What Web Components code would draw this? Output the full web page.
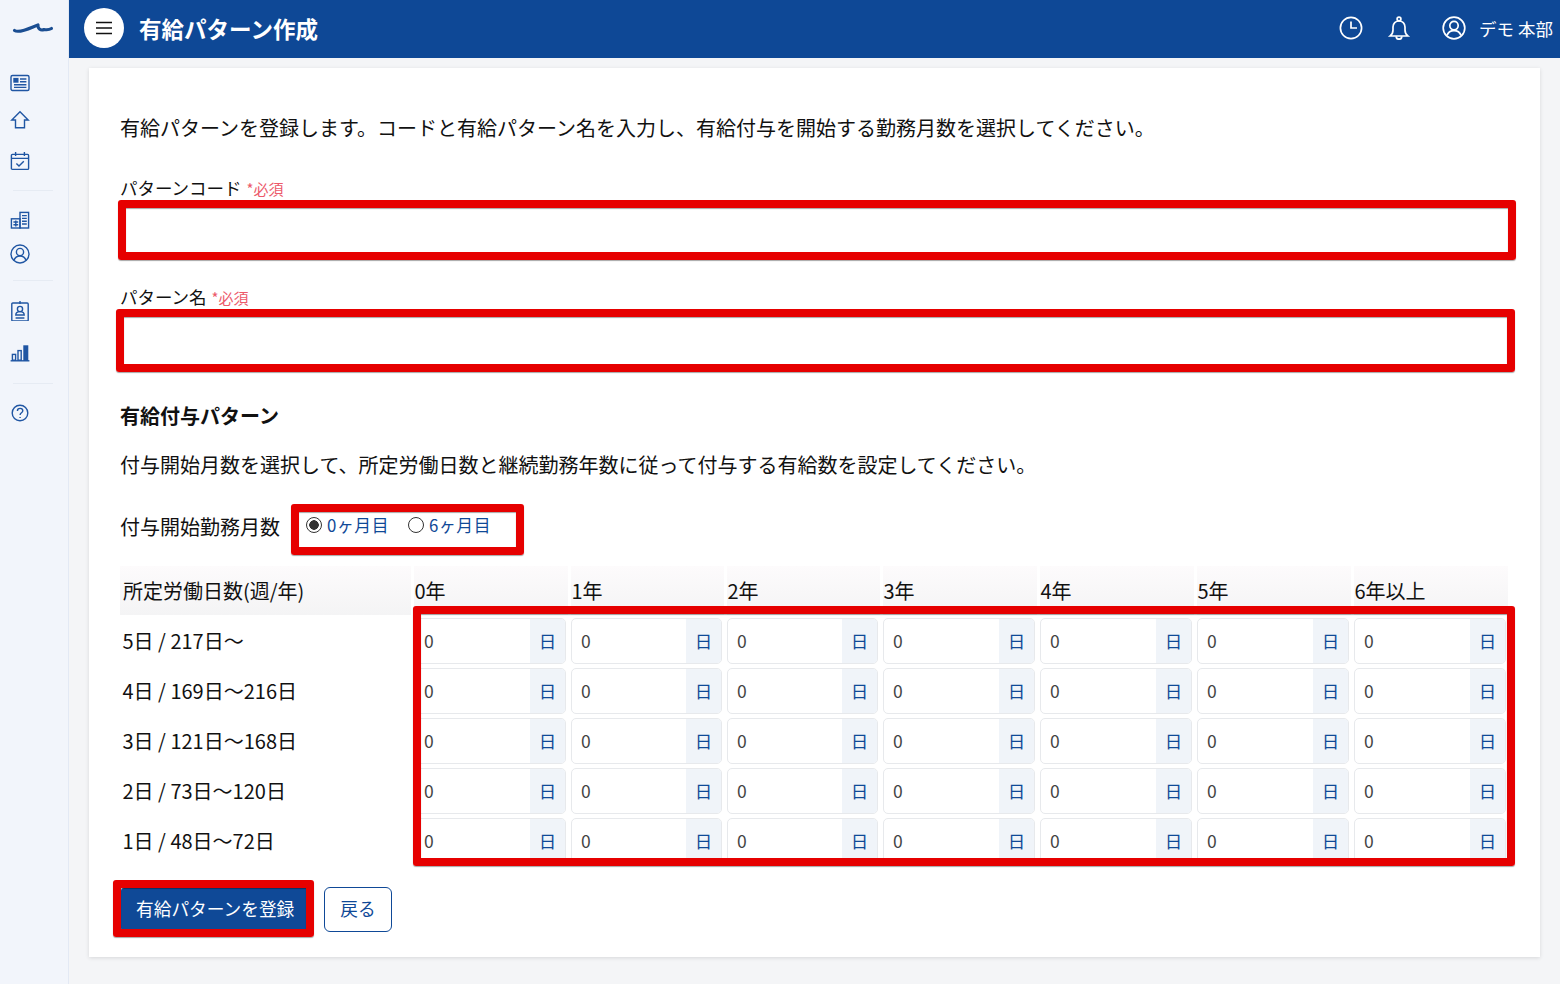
<!doctype html>
<html lang="ja">
<head>
<meta charset="utf-8">
<title>有給パターン作成</title>
<style>
  html, body { margin: 0; height: 100%; }
  body {
    font-family: "Noto Sans CJK JP", "Noto Sans", sans-serif;
    color: #111;
    background: #f4f5f7;
    overflow: hidden;
  }
</style>
</head>
<body>
<app-shell>
  <side-nav slot="side"></side-nav>
  <top-bar slot="top" heading="有給パターン作成" user="デモ 本部"></top-bar>
  <form-card>
    <note-text style="margin-bottom:32px">有給パターンを登録します。コードと有給パターン名を入力し、有給付与を開始する勤務月数を選択してください。</note-text>
    <text-field label="パターンコード"></text-field>
    <text-field label="パターン名" style="margin-top:30px"></text-field>
    <note-text bold style="margin-top:38px">有給付与パターン</note-text>
    <note-text style="margin-top:19px">付与開始月数を選択して、所定労働日数と継続勤務年数に従って付与する有給数を設定してください。</note-text>
    <radio-row label="付与開始勤務月数" style="margin-top:32px">
      <radio-item checked>0ヶ月目</radio-item>
      <radio-item>6ヶ月目</radio-item>
    </radio-row>
    <grant-table></grant-table>
    <action-row>
      <app-button primary>有給パターンを登録</app-button>
      <app-button>戻る</app-button>
    </action-row>
  </form-card>
  <mark-box slot="marks" style="left:118px;top:200px;width:1398px;height:60px"></mark-box>
  <mark-box slot="marks" style="left:116px;top:309px;width:1399px;height:63px"></mark-box>
  <mark-box slot="marks" style="left:291px;top:504px;width:233px;height:51px"></mark-box>
  <mark-box slot="marks" style="left:413px;top:606px;width:1102px;height:260px"></mark-box>
  <mark-box slot="marks" style="left:113px;top:880px;width:201px;height:57px"></mark-box>
</app-shell>

<script>
const ICONS = {
  card: '<rect x="1" y="2.500" width="18" height="15" rx="1.500"/><rect x="4" y="5.600" width="3.800" height="3.400" fill="currentColor"/><path d="M10 6h6.400M10 8.800h6.400M4 11.800h12.400M4 14.400h12.400"/>',
  home: '<path d="M10 1.800 1.800 10h3.700v7.800h9V10h3.700z"/>',
  calendar: '<rect x="1.400" y="3.400" width="17.200" height="15" rx="1"/><path d="M1.400 7.400h17.200M5.600 1v4M14.400 1v4M6.400 12.400l2.600 2.600 4.800-4.800"/>',
  office: '<rect x="1.400" y="8.800" width="8.600" height="9.200"/><rect x="10" y="2.400" width="8.600" height="15.600"/><path d="M12 5.600h4.800M12 8.400h4.800M12 11.200h4.800M12 14h4.800M3.400 12h4.800M3.400 14.800h4.800M5.800 10.500v6"/>',
  person: '<circle cx="10" cy="10" r="9"/><circle cx="10" cy="8" r="3.600"/><path d="M4 16.400c1-3.200 3.200-4.400 6-4.400s5 1.200 6 4.400"/>',
  badge: '<rect x="1.800" y="2" width="16.400" height="18" rx="1"/><path d="M10 0v3"/><circle cx="10" cy="8" r="2.600"/><path d="M5.800 14c0-2.200 1.800-3.400 4.200-3.400s4.200 1.200 4.200 3.400zM5.600 17h8.800"/>',
  chart: '<path d="M.6 17.800h18.800"/><rect x="2.400" y="11.400" width="3.200" height="5.800"/><rect x="8" y="7.600" width="3.200" height="9.600"/><rect x="14" y="3" width="3.600" height="14.200" fill="currentColor"/>',
  help: '<circle cx="10" cy="10" r="7.800"/><path d="M7.400 8c0-1.600 1-2.600 2.700-2.600s2.700 1 2.700 2.400c0 2-2.700 2-2.700 4.200"/><path d="M10.100 14v1.100"/>',
  clock: '<circle cx="12" cy="12" r="10.600"/><path d="M12 5.600V12h6"/>',
  bell: '<path d="M3.200 20c1.800-1.500 2.800-3.200 2.800-6v-3c0-3.400 2.600-6 6-6s6 2.600 6 6v3c0 2.800 1 4.500 2.800 6z"/><circle cx="12" cy="3" r="1.900"/><path d="M9.200 20.200c0 2 1.300 3 2.800 3s2.800-1 2.800-3"/>',
  user: '<circle cx="12" cy="12" r="10.800"/><circle cx="12" cy="9.600" r="4.200"/><path d="M5 19.400c1.200-3.400 3.800-4.800 7-4.800s5.800 1.400 7 4.800"/>'
};

class AppShell extends HTMLElement {
  connectedCallback() {
    this.attachShadow({ mode: "open" }).innerHTML = `
      <style>
        :host { display: grid; grid-template-columns: 69px 1fr; grid-template-rows: 58px 1fr; width: 1560px; height: 984px; position: relative; overflow: hidden; }
        #side { grid-row: 1 / 3; }
        #main { padding: 10px 20px 0; }
      </style>
      <div id="side"><slot name="side"></slot></div>
      <div id="top"><slot name="top"></slot></div>
      <div id="main"><slot></slot></div>
      <slot name="marks"></slot>
    `;
  }
}

class SideNav extends HTMLElement {
  connectedCallback() {
    const item = (name, top, size = 20) => `<svg class="icon" style="margin-top:${top}px" width="${size}" height="${size}" viewBox="0 0 20 20"><g>${ICONS[name]}</g></svg>`;
    this.attachShadow({ mode: "open" }).innerHTML = `
      <style>
        :host { display: flex; flex-direction: column; align-items: flex-start; box-sizing: border-box; height: 984px; background: #f2f5fb; border-right: 1px solid #e3e9f4; color: #2056a3; }
        #logo { width: 68px; height: 58px; flex: none; display: block; margin-bottom: 15px; }
        svg g { fill: none; stroke: currentColor; stroke-width: 1.400; }
        svg { flex: none; display: block; }
        .icon { margin-left: 10px; }
        hr { width: 40px; border: 0; border-top: 1px solid #e6ebf3; margin: 0 0 0 13px; flex: none; }
      </style>
      <svg id="logo" viewBox="0 0 68 58"><path d="M14.500 30.500C18 33 26 30 33 27l5-2.200c-.5 4.200 3 6.200 6 4.700 3 .5 5 .5 7.500-1" fill="none" stroke="#1b4e92" stroke-width="3.100" stroke-linecap="round" stroke-linejoin="round"/></svg>
      ${item("card", 0)}${item("home", 17)}${item("calendar", 21)}
      <hr style="margin-top:19px">
      ${item("office", 19)}${item("person", 14)}
      <hr style="margin-top:16px">
      ${item("badge", 20)}${item("chart", 22)}
      <hr style="margin-top:20px">
      ${item("help", 19)}
    `;
  }
}

class TopBar extends HTMLElement {
  connectedCallback() {
    const icon = (name) => `<svg width="24" height="24" viewBox="0 0 24 24"><g>${ICONS[name]}</g></svg>`;
    this.attachShadow({ mode: "open" }).innerHTML = `
      <style>
        :host { display: flex; align-items: center; height: 58px; background: #0e4896; color: #fff; padding: 0 7px 2px 15px; box-sizing: border-box; }
        #menu { width: 40px; height: 40px; border-radius: 50%; background: #fff; display: grid; place-items: center; flex: none; }
        h1 { font-size: 22.500px; font-weight: 700; margin: -1px 0 0 15px; flex: 1; line-height: 30px; }
        svg g { fill: none; stroke: currentColor; stroke-width: 1.700; }
        svg { display: block; flex: none; }
        #tools { display: flex; align-items: center; }
        #user { font-size: 17.500px; margin-left: 13px; }
      </style>
      <div id="menu"><svg width="18" height="14" viewBox="0 0 18 14"><path d="M1 1.500h16M1 7h16M1 12.500h16" stroke="#111" stroke-width="1.700"/></svg></div>
      <h1>${this.getAttribute("heading")}</h1>
      <div id="tools">
        ${icon("clock")}
        <span style="width:24px"></span>${icon("bell")}
        <span style="width:31px"></span>${icon("user")}
        <span id="user">${this.getAttribute("user")}</span>
      </div>
    `;
  }
}

class FormCard extends HTMLElement {
  connectedCallback() {
    this.attachShadow({ mode: "open" }).innerHTML = `
      <style>
        :host { display: block; box-sizing: border-box; width: 1451px; height: 889px; background: #fff; padding: 45px 31px 0; box-shadow: 0 1px 4px rgba(0,0,0,.12); }
      </style>
      <slot></slot>
    `;
  }
}

class NoteText extends HTMLElement {
  connectedCallback() {
    this.attachShadow({ mode: "open" }).innerHTML = `
      <style>
        :host { display: block; font-size: 20px; line-height: 30px; white-space: nowrap; }
        :host([bold]) { font-weight: 700; }
      </style>
      <slot></slot>
    `;
  }
}

class TextField extends HTMLElement {
  connectedCallback() {
    this.attachShadow({ mode: "open" }).innerHTML = `
      <style>
        :host { display: block; }
        #label { font-size: 17.500px; line-height: 26px; }
        #req { font-size: 15px; color: #ec5a6b; margin-left: 1px; }
        #box { display: block; height: 46px; margin-top: 6px; width: 1388px; box-sizing: border-box; background: #fff; }
      </style>
      <div id="label">${this.getAttribute("label")} <span id="req">*必須</span></div>
      <div id="box"></div>
    `;
  }
}

class RadioRow extends HTMLElement {
  connectedCallback() {
    this.attachShadow({ mode: "open" }).innerHTML = `
      <style>
        :host { display: flex; align-items: center; height: 30px; }
        #label { font-size: 20px; line-height: 30px; width: 186px; flex: none; }
        #items { display: flex; gap: 19px; margin-top: -5px; }
      </style>
      <div id="label">${this.getAttribute("label")}</div>
      <div id="items"><slot></slot></div>
    `;
  }
}

class RadioItem extends HTMLElement {
  connectedCallback() {
    this.attachShadow({ mode: "open" }).innerHTML = `
      <style>
        :host { display: inline-flex; align-items: center; gap: 5px; font-size: 16.800px; line-height: 24px; color: #0f4997; letter-spacing: .6px; }
        #dot { width: 16px; height: 16px; box-sizing: border-box; border: 1.500px solid #333; border-radius: 50%; flex: none; background: #fff; }
        :host([checked]) #dot { background: radial-gradient(circle, #333 0 4.500px, #fff 5px); }
      </style>
      <span id="dot"></span><span><slot></slot></span>
    `;
  }
}

class DayInput extends HTMLElement {
  connectedCallback() {
    this.attachShadow({ mode: "open" }).innerHTML = `
      <style>
        :host { display: flex; height: 46px; margin-right: 2px; box-sizing: border-box; border: 1px solid #e7e9ec; border-radius: 5px; overflow: hidden; background: #fff; }
        #value { flex: 1; padding-left: 9px; font-size: 17.500px; line-height: 44px; color: #444; }
        #unit { width: 35px; flex: none; background: #f0f4f9; color: #0f4997; font-size: 17.500px; line-height: 44px; text-align: center; }
      </style>
      <span id="value"><slot></slot></span><span id="unit">日</span>
    `;
  }
}

class GrantTable extends HTMLElement {
  connectedCallback() {
    const years = ["0年", "1年", "2年", "3年", "4年", "5年", "6年以上"];
    const rows = ["5日 / 217日〜", "4日 / 169日〜216日", "3日 / 121日〜168日", "2日 / 73日〜120日", "1日 / 48日〜72日"];
    this.attachShadow({ mode: "open" }).innerHTML = `
      <style>
        :host { display: grid; grid-template-columns: 291px 154px 153px 153px 154px 154px 154px 154px; grid-template-rows: 49px repeat(5, 47px); gap: 3px; width: 1388px; margin-top: 24px; font-size: 20px; }
        .head { background: linear-gradient(#fdfbfc, #f4f4f5); padding: 10px 3px 0; line-height: 30px; box-sizing: border-box; white-space: nowrap; }
        .row { padding-left: 2.500px; line-height: 46px; white-space: nowrap; }
      </style>
      <div class="head">所定労働日数(週/年)</div>
      ${years.map((y) => `<div class="head" style="padding-left:.5px">${y}</div>`).join("")}
      ${rows.map((r) => `<div class="row">${r}</div>${years.map(() => "<day-input>0</day-input>").join("")}`).join("")}
    `;
  }
}

class ActionRow extends HTMLElement {
  connectedCallback() {
    this.attachShadow({ mode: "open" }).innerHTML = `
      <style>
        :host { display: flex; gap: 14px; margin-top: 22px; }
      </style>
      <slot></slot>
    `;
  }
}

class AppButton extends HTMLElement {
  connectedCallback() {
    this.attachShadow({ mode: "open" }).innerHTML = `
      <style>
        :host { display: block; box-sizing: border-box; height: 45px; padding: 0 15px; border: 1px solid #0f4997; border-radius: 6px; font-size: 17.700px; line-height: 41px; color: #0f4997; background: #fff; white-space: nowrap; }
        :host([primary]) { background: #0f4997; color: #fff; }
      </style>
      <slot></slot>
    `;
  }
}

class MarkBox extends HTMLElement {
  connectedCallback() {
    this.attachShadow({ mode: "open" }).innerHTML = `
      <style>
        :host { position: absolute; display: block; box-sizing: border-box; border: 8px solid #e60000; border-radius: 3px; pointer-events: none; box-shadow: 0 1px 1px rgba(0,0,0,.35), inset 0 1px 1px rgba(0,0,0,.35); }
      </style>
    `;
  }
}

customElements.define("app-shell", AppShell);
customElements.define("side-nav", SideNav);
customElements.define("top-bar", TopBar);
customElements.define("form-card", FormCard);
customElements.define("note-text", NoteText);
customElements.define("text-field", TextField);
customElements.define("radio-row", RadioRow);
customElements.define("radio-item", RadioItem);
customElements.define("day-input", DayInput);
customElements.define("grant-table", GrantTable);
customElements.define("action-row", ActionRow);
customElements.define("app-button", AppButton);
customElements.define("mark-box", MarkBox);
</script>
</body>
</html>
